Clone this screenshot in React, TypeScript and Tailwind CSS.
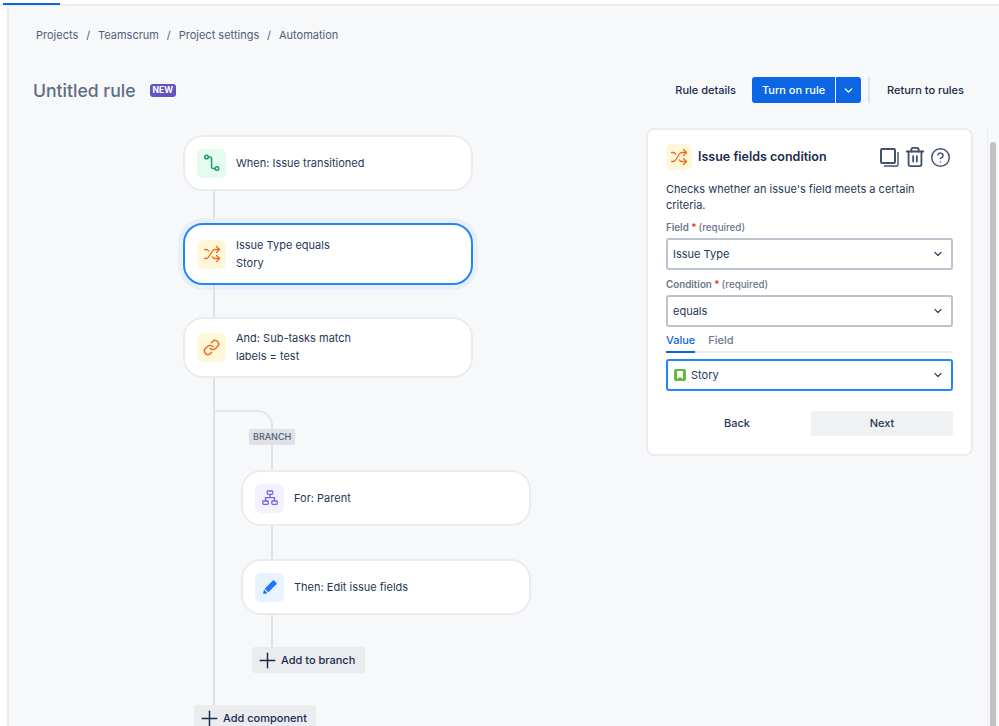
import { FC, ReactNode } from 'react';
import { ChevronDown, Plus, Link, Shuffle, HelpCircle, Trash2 } from 'lucide-react';

const Stub: FC<{ h: string }> = ({ h }) => (
  <div className={`${h} ml-[30px] w-[2px] bg-[#dfe1e6]`} />
);

const TransitionIcon = () => (
  <svg width="20" height="20" viewBox="0 0 20 20" fill="none" stroke="#1f9d6b" strokeWidth="1.5">
    <circle cx="4.5" cy="4" r="1.8" />
    <circle cx="15" cy="15.5" r="1.8" />
    <path d="M6.3 4H8a1.6 1.6 0 0 1 1.6 1.6v8.3A1.6 1.6 0 0 0 11.2 15.5h2" />
  </svg>
);

const HierarchyIcon = () => (
  <svg width="16" height="16" viewBox="0 0 16 16" fill="none" stroke="#7a65e0" strokeWidth="1.3">
    <rect x="5.2" y="1" width="5.6" height="3.4" rx="0.8" />
    <rect x="0.8" y="11" width="5.4" height="3.4" rx="0.8" />
    <rect x="9.8" y="11" width="5.4" height="3.4" rx="0.8" />
    <path d="M8 4.4v3.3M3.5 11V7.7h9V11" />
  </svg>
);

const PencilIcon = () => (
  <svg width="16" height="16" viewBox="0 0 16 16" fill="#1f75fe">
    <path d="M10.8 1.6a1 1 0 0 1 1.4 0l2.2 2.2a1 1 0 0 1 0 1.4L6.3 13.3 2.7 9.7z" />
    <path d="M2 10.6l3.4 3.4-3.2.9a.8.8 0 0 1-1-1z" />
  </svg>
);

const CopyIcon = () => (
  <svg width="19" height="19" viewBox="0 0 19 19" fill="none" stroke="#42526e" strokeWidth="2">
    <rect x="1" y="1" width="14" height="14" rx="1.2" />
    <path d="M18 4v12.8a1.2 1.2 0 0 1-1.2 1.2H4" strokeWidth="1.4" />
  </svg>
);

const StoryIcon = () => (
  <span className="flex h-[12px] w-[12px] items-center justify-center rounded-[2px] bg-[#63ba3c]">
    <svg width="6" height="8" viewBox="0 0 6 8" fill="#ffffff">
      <path d="M0 1a1 1 0 0 1 1-1h4a1 1 0 0 1 1 1v7L3 6 0 8z" />
    </svg>
  </span>
);

const IconTile: FC<{ bg: string; children: ReactNode; size?: string }> = ({
  bg,
  children,
  size = 'h-[29px] w-[29px]',
}) => (
  <div className={`flex shrink-0 items-center justify-center rounded-[6px] ${bg} ${size}`}>
    {children}
  </div>
);

const Node: FC<{
  icon: ReactNode;
  lines: string[];
  h: string;
  active?: boolean;
}> = ({ icon, lines, h, active }) => (
  <div
    className={`flex w-[290px] items-center gap-[10px] rounded-[20px] bg-white pl-[12px] text-[11px] text-[#253858] ${h} ${
      active
        ? 'border-2 border-[#2684ff] shadow-[0_0_0_5px_#e9f0fc]'
        : 'border-2 border-[#ebecf0]'
    }`}
  >
    {icon}
    <div className="flex flex-col gap-[3px] leading-[15px]">
      {lines.map((line) => (
        <span key={line}>{line}</span>
      ))}
    </div>
  </div>
);

const AddButton: FC<{ label: string; className: string }> = ({ label, className }) => (
  <div
    className={`flex items-center gap-[1px] whitespace-nowrap rounded-[3px] bg-[#ebecf0] pl-[3px] text-[11px] font-medium text-[#172b4d] ${className}`}
  >
    <Plus size={25} strokeWidth={1.4} />
    {label}
  </div>
);

const FieldLabel: FC<{ name: string }> = ({ name }) => (
  <div className="text-[9.8px] font-semibold leading-[14px] text-[#6b778c]">
    {name}
    <span className="text-[#de350b]"> *</span>
    <span className="ml-[2px] font-medium">(required)</span>
  </div>
);

const Select: FC<{ children: ReactNode; focused?: boolean }> = ({ children, focused }) => (
  <div
    className={`flex h-[32px] items-center justify-between rounded-[3px] bg-white pl-[5px] pr-[7px] text-[11px] text-[#253858] ${
      focused ? 'border-2 border-[#2684ff]' : 'border-2 border-[#bcc3cf]'
    }`}
  >
    {children}
    <ChevronDown size={12} strokeWidth={2.4} className="text-[#344563]" />
  </div>
);

const RulePanel = () => (
  <aside className="flex h-[328px] w-[327px] shrink-0 flex-col rounded-[8px] border-2 border-[#ebecf0] bg-white px-[18px] pt-[14px]">
    <div className="flex items-center">
      <IconTile bg="bg-[#fff7d9]" size="h-[26px] w-[26px]">
        <Shuffle size={18} strokeWidth={1.7} className="text-[#f0681c]" />
      </IconTile>
      <span className="ml-[6px] text-[12.5px] font-semibold text-[#172b4d]">
        Issue fields condition
      </span>
      <div className="ml-auto mr-[2px] flex items-center gap-[4.5px] text-[#42526e]">
        <CopyIcon />
        <Trash2 size={22} strokeWidth={2} />
        <HelpCircle size={21} strokeWidth={1.7} />
      </div>
    </div>
    <p className="mt-[11px] text-[11px] leading-[16px] text-[#253858]">
      Checks whether an issue's field meets a certain criteria.
    </p>
    <div className="mt-[8px] flex flex-col gap-[3px]">
      <FieldLabel name="Field" />
      <Select>Issue Type</Select>
    </div>
    <div className="mt-[8px] flex flex-col gap-[3px]">
      <FieldLabel name="Condition" />
      <Select>equals</Select>
    </div>
    <div className="mt-[5px] flex h-[21px] gap-[13px] border-b-2 border-[#ebecf0] text-[11px] font-medium text-[#6b778c]">
      <span className="-mb-[2px] border-b-2 border-[#0c66e4] text-[#0c66e4]">Value</span>
      <span>Field</span>
    </div>
    <div className="mt-[6px]">
      <Select focused>
        <span className="flex items-center gap-[5px] pl-px">
          <StoryIcon />
          Story
        </span>
      </Select>
    </div>
    <div className="mt-[20px] flex h-[25px] items-center text-[11px] font-medium text-[#253858]">
      <div className="flex h-full w-[142px] items-center justify-center">Back</div>
      <div className="ml-auto flex h-full w-[142px] items-center justify-center rounded-[3px] bg-[#f0f1f3]">
        Next
      </div>
    </div>
  </aside>
);

export default function App() {
  return (
    <div
      className="flex h-[726px] w-[999px] flex-col overflow-hidden bg-white"
      style={{ fontFamily: 'Inter, "Liberation Sans", sans-serif' }}
    >
      <div className="h-[6px] shrink-0 border-b-2 border-[#ebecf0] pl-[3px] pt-[3px]">
        <div className="h-[2px] w-[57px] bg-[#0c66e4]" />
      </div>
      <div className="flex min-h-0 flex-1">
        <div className="w-[9px] shrink-0 border-r-2 border-[#ebecf0] bg-white" />
        <main className="min-w-0 flex-1 bg-[#f7f8f9]">
          <nav className="ml-[27px] mt-[21px] flex h-[16px] items-center gap-[7.9px] text-[11px] text-[#505f79]">
            <span>Projects</span>
            <span>/</span>
            <span>Teamscrum</span>
            <span>/</span>
            <span>Project settings</span>
            <span>/</span>
            <span>Automation</span>
          </nav>
          <header className="ml-[24px] mt-[34px] flex h-[26px] items-center">
            <h1 className="relative top-px text-[17.6px] font-medium text-[#5e6c84]">Untitled rule</h1>
            <span className="ml-[14px] rounded-[3px] bg-[#6554c0] px-[3px] text-[8.5px] font-bold leading-[13px] text-white">
              NEW
            </span>
            <div className="ml-auto mr-[35px] flex items-center text-[11px] font-medium text-[#172b4d]">
              <span>Rule details</span>
              <div className="ml-[16px] flex h-[26px] items-center gap-[1px] text-white">
                <span className="flex h-full w-[83px] items-center justify-center rounded-l-[3px] bg-[#0c66e4]">
                  Turn on rule
                </span>
                <span className="flex h-full w-[25px] items-center justify-center rounded-r-[3px] bg-[#0c66e4]">
                  <ChevronDown size={13} strokeWidth={2.6} />
                </span>
              </div>
              <span className="ml-[7px] h-[26px] w-[2px] bg-[#e2e4e9]" />
              <span className="ml-[17px]">Return to rules</span>
            </div>
          </header>
          <div className="mt-[25px] flex items-start">
            <section className="relative ml-[174px] mt-[7px] w-[350px]">
              <Node
                h="h-[56px]"
                lines={['When: Issue transitioned']}
                icon={
                  <IconTile bg="bg-[#e3fcef]">
                    <TransitionIcon />
                  </IconTile>
                }
              />
              <Stub h="h-[32px]" />
              <Node
                active
                h="h-[62px]"
                lines={['Issue Type equals', 'Story']}
                icon={
                  <IconTile bg="bg-[#fff7d9]">
                    <Shuffle size={18} strokeWidth={1.7} className="text-[#f0681c]" />
                  </IconTile>
                }
              />
              <Stub h="h-[32px]" />
              <Node
                h="h-[61px]"
                lines={['And: Sub-tasks match', 'labels = test']}
                icon={
                  <IconTile bg="bg-[#fff7d9]">
                    <Link size={17} strokeWidth={2.1} className="text-[#f0681c]" />
                  </IconTile>
                }
              />
              <div className="relative">
                <div className="absolute bottom-0 left-[30px] top-0 w-[2px] bg-[#dfe1e6]" />
                <div className="h-[32px]" />
                <div className="ml-[32px] h-[26px] w-[58px] rounded-tr-[16px] border-r-2 border-t-2 border-[#e3e5e9]" />
                <div className="relative ml-[58px] h-[34px]">
                  <div className="absolute -top-[7px] left-[8px] rounded-[2px] bg-[#dfe1e6] px-[4px] text-[9px] font-medium leading-[16px] text-[#505f79]">
                    BRANCH
                  </div>
                  <div className="absolute bottom-0 left-[30px] top-[9px] w-[2px] bg-[#dfe1e6]" />
                </div>
                <div className="ml-[58px]">
                  <Node
                    h="h-[56px]"
                    lines={['For: Parent']}
                    icon={
                      <IconTile bg="bg-[#f3f0ff]">
                        <HierarchyIcon />
                      </IconTile>
                    }
                  />
                  <Stub h="h-[33px]" />
                  <Node
                    h="h-[56px]"
                    lines={['Then: Edit issue fields']}
                    icon={
                      <IconTile bg="bg-[#e9f2ff]">
                        <PencilIcon />
                      </IconTile>
                    }
                  />
                  <Stub h="h-[32px]" />
                  <AddButton label="Add to branch" className="ml-[11px] h-[26px] w-[113px]" />
                </div>
                <div className="h-[32px]" />
              </div>
              <AddButton label="Add component" className="ml-[11px] h-[26px] w-[122px]" />
            </section>
            <div className="ml-[113px]">
              <RulePanel />
            </div>
            <div className="ml-[14px] h-[620px] w-[12px] shrink-0 border-l border-[#ebecf0] pl-[2px] pt-[14px]">
              <div className="h-full w-[6px] rounded-[3px] bg-[#c1c1c1]" />
            </div>
          </div>
        </main>
      </div>
    </div>
  );
}
